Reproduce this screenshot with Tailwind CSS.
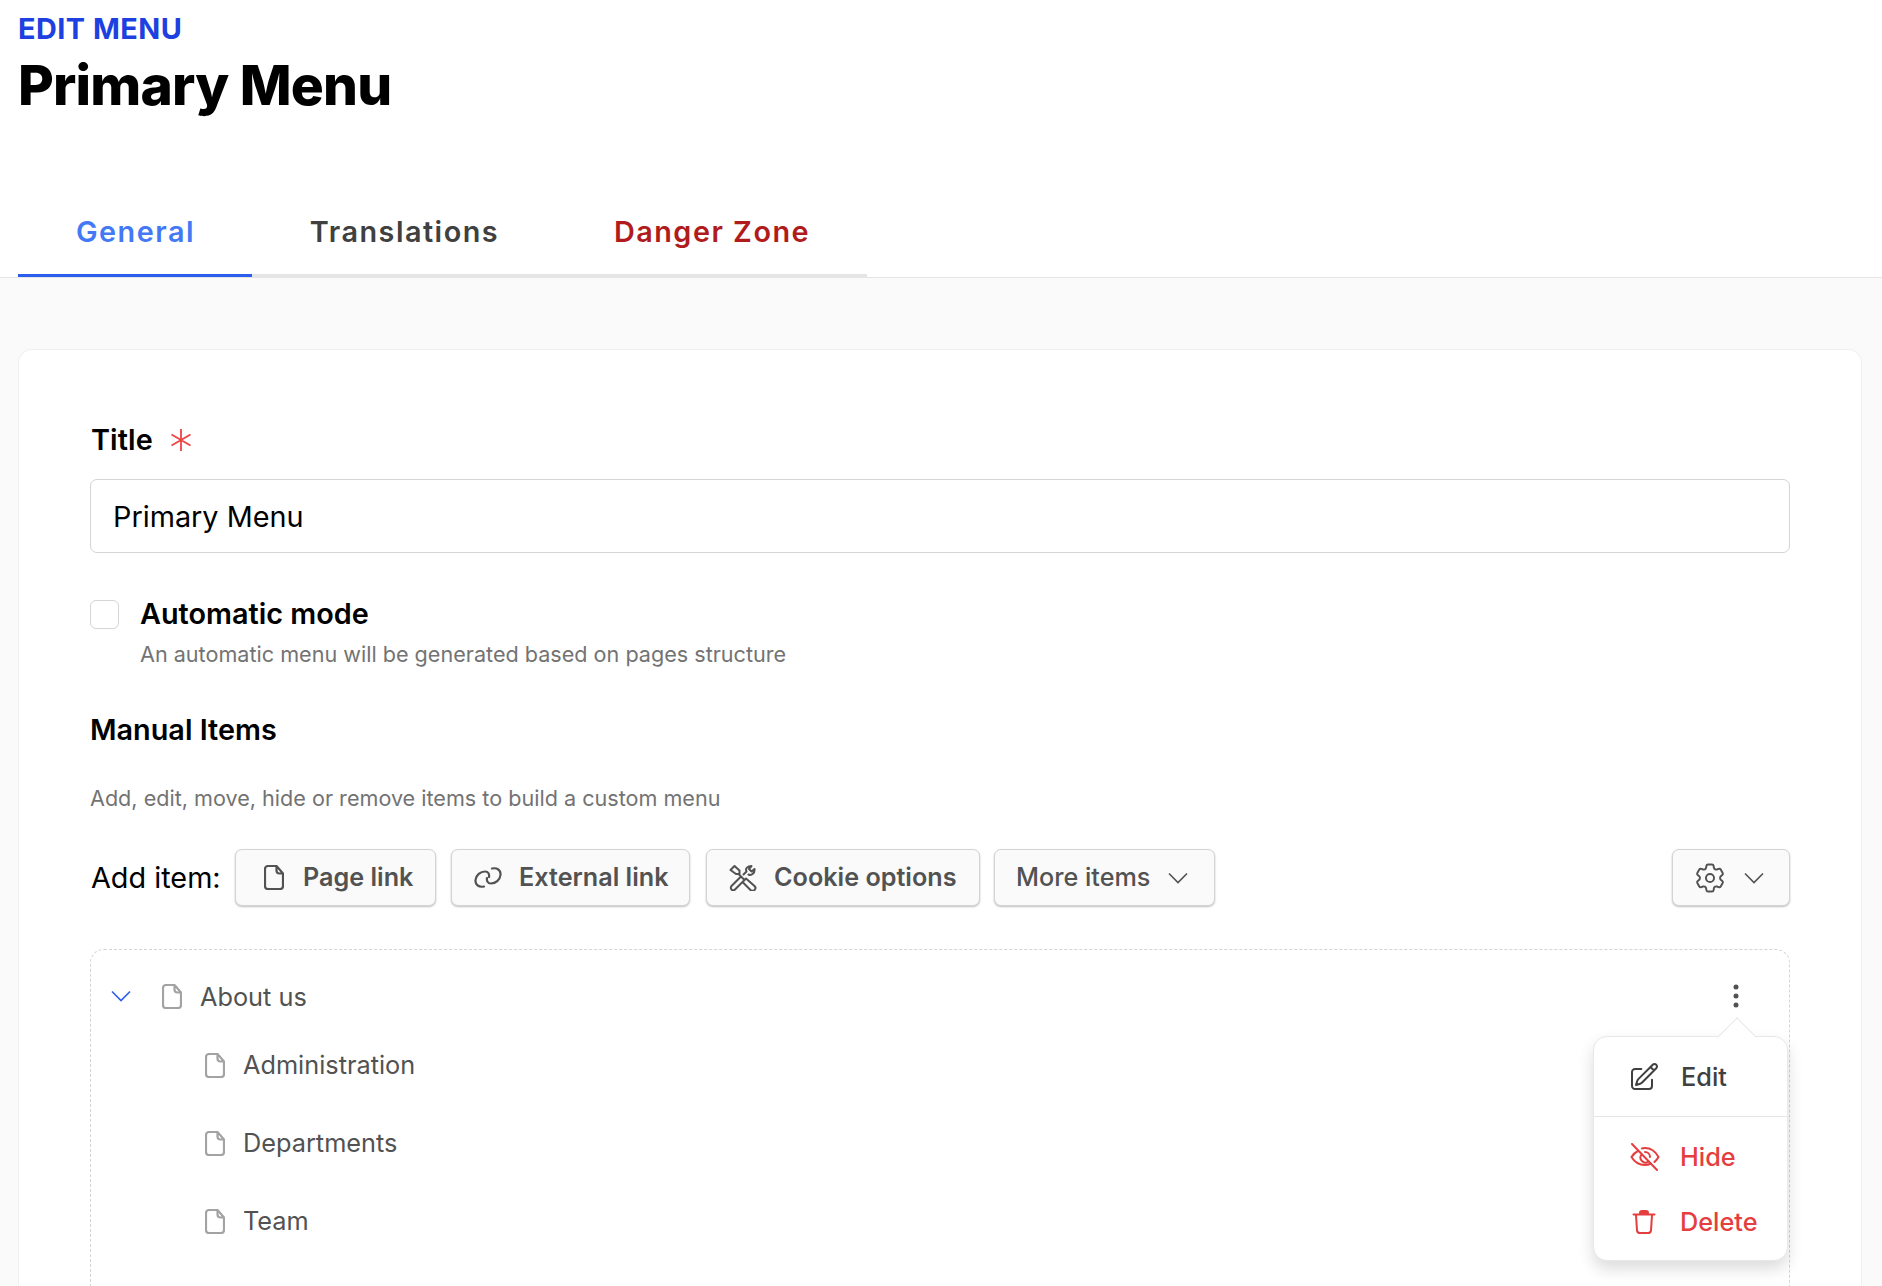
<!doctype html>
<html>
<head>
<meta charset="utf-8">
<script src="https://cdn.jsdelivr.net/npm/@tailwindcss/browser@4"></script>
<title>Primary Menu</title>
</head>
<body class="h-[1286px] overflow-hidden bg-[#fafafa] font-['Inter',sans-serif]">
<svg class="hidden">
  <defs>
    <symbol id="file" viewBox="0 0 20 25"><path d="M4 1h8.500L19 8.500V21a3 3 0 0 1-3 3H4a3 3 0 0 1-3-3V4a3 3 0 0 1 3-3zM12.500 1v4.500a3 3 0 0 0 3 3H19" fill="none" stroke="currentColor" stroke-width="2.200" stroke-linejoin="round"/></symbol>
    <symbol id="chev" viewBox="0 0 20 12"><path d="M1 1.500l9 9 9-9" fill="none" stroke="currentColor" stroke-width="1.600"/></symbol>
  </defs>
</svg>
<header class="bg-white h-[278px] border-b border-[#e5e5e5] px-[18px] flex flex-col">
  <div class="pt-[11px] text-[28.800px] leading-[36px] font-bold text-[#1d40e0] tracking-[0.500px]">EDIT MENU</div>
  <h1 class="mt-[2px] text-[55px] leading-[72px] font-extrabold text-black tracking-[-0.800px]">Primary Menu</h1>
  <nav class="mt-auto flex w-[849px] h-[78px] border-b-[3px] border-[#e5e5e5] text-[28.800px] font-semibold tracking-[1.500px]">
    <a class="w-[234px] h-[78px] pb-[10px] pl-[1px] border-b-[3px] border-[#2c5eee] text-[#4479f5] flex items-center justify-center">General</a>
    <a class="w-[300px] h-[75px] pb-[10px] pl-[5px] text-[#404040] flex items-center justify-center">Translations</a>
    <a class="w-[315px] h-[75px] pb-[10px] pl-[5px] text-[#b01c1c] flex items-center justify-center">Danger Zone</a>
  </nav>
</header>
<main class="ml-[18px] mr-[20px] mt-[71px] h-[937px] bg-white rounded-t-[14px] border border-b-0 border-[#f0f0f0] px-[71px] pt-[72px]">
  <label class="flex items-center h-[36px] text-[28.800px] tracking-[0.100px] font-semibold text-black pl-[1px]">Title
    <svg class="ml-[17px] w-[22px] h-[22px] text-[#ef4444]" viewBox="0 0 22 22" fill="none" stroke="currentColor" stroke-width="1.800"><path d="M11 0v22M1.500 5.500l19 11M20.500 5.500l-19 11"/></svg>
  </label>
  <div class="mt-[21px] h-[74px] pt-[1px] rounded-[7px] border border-[#d4d4d4] px-[22px] flex items-center text-[28.800px] text-black">Primary Menu</div>
  <div class="mt-[46px] flex">
    <span class="mt-[1px] w-[29px] h-[29px] rounded-[6px] border border-[#d4d4d4] bg-white"></span>
    <div class="ml-[21px]">
      <div class="text-[28.800px] leading-[30px] font-semibold text-black">Automatic mode</div>
      <div class="mt-[11px] text-[21.600px] leading-[28px] text-[#737373]">An automatic menu will be generated based on pages structure</div>
    </div>
  </div>
  <h2 class="mt-[45px] text-[28.800px] leading-[34px] font-semibold text-black">Manual Items</h2>
  <p class="mt-[37px] text-[21.600px] leading-[28px] text-[#737373]">Add, edit, move, hide or remove items to build a custom menu</p>
  <div class="mt-[37px] flex items-center h-[57px]">
    <span class="pl-[1px] w-[145px] text-[28.800px] text-black">Add item:</span>
    <button class="h-[57px] w-[201px] pl-[28px] rounded-[7px] border border-[#d4d4d4] bg-[#fafafa] shadow-[0_1px_2px_rgba(0,0,0,0.25)] text-[25.200px] font-semibold text-[#525252] flex items-center gap-[19px]">
      <svg class="w-[20px] h-[25px]"><use href="#file"/></svg>Page link
    </button>
    <button class="ml-[15px] h-[57px] w-[239px] pl-[22px] rounded-[7px] border border-[#d4d4d4] bg-[#fafafa] shadow-[0_1px_2px_rgba(0,0,0,0.25)] text-[25.200px] font-semibold text-[#525252] flex items-center gap-[17px]">
      <svg class="w-[28px] h-[21px]" viewBox="0 0 28 21" fill="none" stroke="currentColor" stroke-width="2.200" stroke-linecap="round"><path d="M10 19.500C5 20.500 1 18 1.500 13 2 8 6.500 4.500 11 4.500c3.500 0 4.500 3 4 5.500M18 1.500C23 .5 27 3 26.500 8 26 13 21.500 16.500 17 16.500c-3.500 0-4.500-3-4-5.500"/></svg>External link
    </button>
    <button class="ml-[16px] h-[57px] w-[274px] pl-[22px] rounded-[7px] border border-[#d4d4d4] bg-[#fafafa] shadow-[0_1px_2px_rgba(0,0,0,0.25)] text-[25.200px] font-semibold text-[#525252] flex items-center gap-[17px]">
      <svg class="w-[28px] h-[26px]" viewBox="0 0 28 26" fill="none" stroke="currentColor" stroke-width="2" stroke-linejoin="round" stroke-linecap="round"><path d="M1.500 5L5.500 1l5 4.500V9H7zM9.500 9l5.500 5.500M13.500 17l3.500-3.500 8.500 7.500a2.400 2.400 0 0 1-4 4zM11 12.500l-8.500 8.500a2.400 2.400 0 0 0 3.500 3.500L13 17.500M14.500 9.500l3-3c-1.500-3 1-5.500 5-5.500l-2.500 3 2.500 2.500 3-2.500c.5 4-3 7-6 5.500"/></svg>Cookie options
    </button>
    <button class="ml-[14px] h-[57px] w-[221px] pl-[21px] rounded-[7px] border border-[#d4d4d4] bg-[#fafafa] shadow-[0_1px_2px_rgba(0,0,0,0.25)] text-[25.200px] font-medium text-[#525252] flex items-center gap-[18px]">
      More items<svg class="w-[20px] h-[12px]"><use href="#chev"/></svg>
    </button>
    <button class="ml-auto h-[57px] w-[118px] pl-[19px] rounded-[7px] border border-[#d4d4d4] bg-[#fafafa] shadow-[0_1px_2px_rgba(0,0,0,0.25)] text-[#525252] flex items-center gap-[16px]">
      <svg class="w-[36px] h-[36px]" viewBox="0 0 24 24" fill="none" stroke="currentColor" stroke-width="1.300"><path d="M9.594 3.940c.090-.542.560-.940 1.110-.940h2.593c.550 0 1.020.398 1.110.940l.213 1.281c.063.374.313.686.645.870.074.040.147.083.220.127.325.196.720.257 1.075.124l1.217-.456a1.125 1.125 0 0 1 1.370.490l1.296 2.247a1.125 1.125 0 0 1-.260 1.431l-1.003.827c-.293.241-.438.613-.430.992a7.723 7.723 0 0 1 0 .255c-.008.378.137.750.430.991l1.004.827c.424.350.534.955.260 1.430l-1.298 2.247a1.125 1.125 0 0 1-1.369.491l-1.217-.456c-.355-.133-.750-.072-1.076.124a6.470 6.470 0 0 1-.220.128c-.331.183-.581.495-.644.869l-.213 1.281c-.090.543-.560.940-1.110.940h-2.594c-.550 0-1.019-.398-1.110-.940l-.213-1.281c-.062-.374-.312-.686-.644-.870a6.520 6.520 0 0 1-.220-.127c-.325-.196-.720-.257-1.076-.124l-1.217.456a1.125 1.125 0 0 1-1.369-.490l-1.297-2.247a1.125 1.125 0 0 1 .260-1.431l1.004-.827c.292-.240.437-.613.430-.991a6.932 6.932 0 0 1 0-.255c.007-.380-.138-.751-.430-.992l-1.004-.827a1.125 1.125 0 0 1-.260-1.430l1.297-2.247a1.125 1.125 0 0 1 1.370-.491l1.216.456c.356.133.751.072 1.076-.124.072-.044.146-.086.220-.128.332-.183.582-.495.644-.869l.214-1.280Z"/><circle cx="12" cy="12" r="2.700"/></svg>
      <svg class="w-[20px] h-[12px]"><use href="#chev"/></svg>
    </button>
  </div>
  <section class="relative mt-[43px] h-[337px] rounded-t-[14px] border border-b-0 border-dashed border-[#d4d4d4] text-[25.300px] text-[#525252]">
    <div class="flex items-center h-[92px] pl-[20px]">
      <svg class="w-[20px] h-[12px] text-[#2c5eee]"><use href="#chev"/></svg>
      <svg class="ml-[31px] w-[20px] h-[25px] text-[#a3a3a3]"><use href="#file"/></svg>
      <span class="ml-[18px] pt-[2px]">About us</span>
    </div>
    <div class="flex items-center h-[78px] pl-[114px] -mt-[16px]">
      <svg class="w-[20px] h-[25px] text-[#a3a3a3]"><use href="#file"/></svg><span class="ml-[18px]">Administration</span>
    </div>
    <div class="flex items-center h-[78px] pl-[114px]">
      <svg class="w-[20px] h-[25px] text-[#a3a3a3]"><use href="#file"/></svg><span class="ml-[18px]">Departments</span>
    </div>
    <div class="flex items-center h-[78px] pl-[114px]">
      <svg class="w-[20px] h-[25px] text-[#a3a3a3]"><use href="#file"/></svg><span class="ml-[18px]">Team</span>
    </div>
    <svg class="absolute right-[50px] top-[34px] w-[6px] h-[24px] text-[#525252]" viewBox="0 0 6 24" fill="currentColor"><circle cx="3" cy="3" r="2.500"/><circle cx="3" cy="12" r="2.500"/><circle cx="3" cy="21" r="2.500"/></svg>
    <div class="absolute right-[1px] top-[86px] w-[195px] h-[225px] rounded-[14px] border border-[#e8e8e8] bg-white shadow-[0_8px_16px_rgba(0,0,0,0.14)]">
      <span class="absolute left-[129px] -top-[14px] w-[28px] h-[28px] rotate-45 bg-white border-l border-t border-[#e8e8e8]"></span>
      <div class="relative h-[80px] border-b border-[#e5e5e5] pl-[34px] flex items-center text-[#404040] font-medium">
        <svg class="w-[32px] h-[32px]" viewBox="0 0 24 24" fill="none" stroke="currentColor" stroke-width="1.500" stroke-linejoin="round" stroke-linecap="round"><path d="M16.862 4.487l1.687-1.688a1.875 1.875 0 1 1 2.652 2.652L10.582 16.070a4.500 4.500 0 0 1-1.897 1.130L6 18l.8-2.685a4.500 4.500 0 0 1 1.130-1.897l8.932-8.931zm0 0L19.500 7.125M18 14v4.750A2.250 2.250 0 0 1 15.750 21H5.250A2.250 2.250 0 0 1 3 18.750V8.250A2.250 2.250 0 0 1 5.250 6H10"/></svg>
        <span class="ml-[21px]">Edit</span>
      </div>
      <div class="h-[65px] mt-[7px] pl-[36px] flex items-center text-[#e53e3e] font-medium">
        <svg class="w-[30px] h-[28px]" viewBox="0 0 30 28" fill="none" stroke="currentColor" stroke-width="2" stroke-linecap="round"><path d="M2 1l25 26M8 8C5 9.500 3 11.500 1.500 14c3 5 8 8 13.500 8 2 0 4-.5 6-1.500M12 5.500c1-.2 2-.5 3-.5 5.500 0 10.500 3.500 13.500 9-1 2-2.500 3.500-4 5M11.500 11.500a5 5 0 0 0 7 7M15 9a5 5 0 0 1 5 5"/></svg>
        <span class="ml-[20px]">Hide</span>
      </div>
      <div class="h-[65px] pl-[38px] flex items-center text-[#e53e3e] font-medium">
        <svg class="w-[24px] h-[26px]" viewBox="0 0 24 26" fill="none" stroke="currentColor" stroke-width="2" stroke-linecap="round" stroke-linejoin="round"><path d="M1.500 5.500h21M4 6l1 15.500a3 3 0 0 0 3 2.500h8a3 3 0 0 0 3-2.500L20 6"/><path d="M8 4.500a2 2 0 0 1 2-2.500h4a2 2 0 0 1 2 2.500z" fill="currentColor"/></svg>
        <span class="ml-[24px]">Delete</span>
      </div>
    </div>
  </section>
</main>
</body>
</html>
